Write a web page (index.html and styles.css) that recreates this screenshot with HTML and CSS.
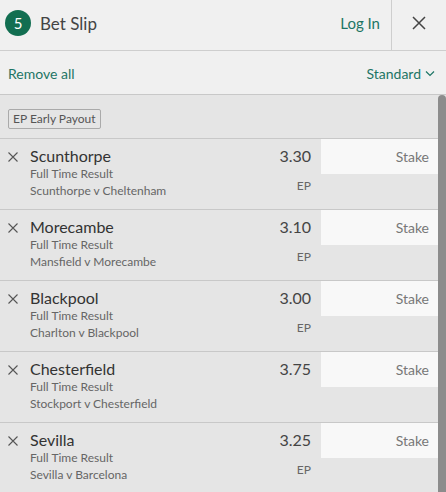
FILE: index.html
```html
<!DOCTYPE html>
<html lang="en">

<head>
    <meta charset="UTF-8">
    <meta name="viewport" content="width=device-width, initial-scale=1.0">
    <title>Bet Slip</title>
    <link rel="stylesheet" href="styles.css">
</head>

<body>
    <main>
        <header class="top">
            <div class="title">
                <span class="count">5</span>
                <span>Bet Slip</span>
            </div>
            <a class="login" href="#">Log In</a>
            <button class="close" aria-label="Close">
                <svg width="14" height="14" viewBox="0 0 14 14"><path d="M1 1L13 13M13 1L1 13" stroke="#444" stroke-width="1.5" fill="none"/></svg>
            </button>
        </header>
        <div class="toolbar">
            <a class="link" href="#">Remove all</a>
            <a class="link" href="#">Standard
                <svg width="10" height="6" viewBox="0 0 10 6"><path d="M1 0.5L5 4.5L9 0.5" stroke="#1d7565" stroke-width="1.2" fill="none"/></svg>
            </a>
        </div>
        <section class="list">
            <div class="thumb"></div>
            <div class="legend"><span class="tag">EP Early Payout</span></div>

            <div class="bet">
                <span class="remove"><svg width="10" height="10" viewBox="0 0 10 10"><path d="M0.5 0.5L9.5 9.5M9.5 0.5L0.5 9.5" stroke="#555" stroke-width="1.1" fill="none"/></svg></span>
                <div class="info">
                    <div class="name">Scunthorpe</div>
                    <div class="sub">Full Time Result</div>
                    <div class="sub">Scunthorpe v Cheltenham</div>
                </div>
                <div class="price">
                    <div class="odds">3.30</div>
                    <div class="ep">EP</div>
                </div>
                <div class="stake">Stake</div>
            </div>

            <div class="bet">
                <span class="remove"><svg width="10" height="10" viewBox="0 0 10 10"><path d="M0.5 0.5L9.5 9.5M9.5 0.5L0.5 9.5" stroke="#555" stroke-width="1.1" fill="none"/></svg></span>
                <div class="info">
                    <div class="name">Morecambe</div>
                    <div class="sub">Full Time Result</div>
                    <div class="sub">Mansfield v Morecambe</div>
                </div>
                <div class="price">
                    <div class="odds">3.10</div>
                    <div class="ep">EP</div>
                </div>
                <div class="stake">Stake</div>
            </div>

            <div class="bet">
                <span class="remove"><svg width="10" height="10" viewBox="0 0 10 10"><path d="M0.5 0.5L9.5 9.5M9.5 0.5L0.5 9.5" stroke="#555" stroke-width="1.1" fill="none"/></svg></span>
                <div class="info">
                    <div class="name">Blackpool</div>
                    <div class="sub">Full Time Result</div>
                    <div class="sub">Charlton v Blackpool</div>
                </div>
                <div class="price">
                    <div class="odds">3.00</div>
                    <div class="ep">EP</div>
                </div>
                <div class="stake">Stake</div>
            </div>

            <div class="bet">
                <span class="remove"><svg width="10" height="10" viewBox="0 0 10 10"><path d="M0.5 0.5L9.5 9.5M9.5 0.5L0.5 9.5" stroke="#555" stroke-width="1.1" fill="none"/></svg></span>
                <div class="info">
                    <div class="name">Chesterfield</div>
                    <div class="sub">Full Time Result</div>
                    <div class="sub">Stockport v Chesterfield</div>
                </div>
                <div class="price">
                    <div class="odds">3.75</div>
                </div>
                <div class="stake">Stake</div>
            </div>

            <div class="bet">
                <span class="remove"><svg width="10" height="10" viewBox="0 0 10 10"><path d="M0.5 0.5L9.5 9.5M9.5 0.5L0.5 9.5" stroke="#555" stroke-width="1.1" fill="none"/></svg></span>
                <div class="info">
                    <div class="name">Sevilla</div>
                    <div class="sub">Full Time Result</div>
                    <div class="sub">Sevilla v Barcelona</div>
                </div>
                <div class="price">
                    <div class="odds">3.25</div>
                    <div class="ep">EP</div>
                </div>
                <div class="stake">Stake</div>
            </div>
        </section>
    </main>
</body>

</html>
```
FILE: styles.css
```css
html, body {
    height: 100%;
}

body {
    background-color: rgb(229, 229, 229);
    color: rgb(51, 51, 51);
    font-family: Lato, "Open Sans", sans-serif;
    margin: 0;
    padding: 0;
}

main {
    display: flex;
    flex-direction: column;
    height: 100%;
}

a {
    text-decoration: none;
}

.top {
    align-items: center;
    background-color: rgb(240, 240, 240);
    border-bottom: 1px solid rgb(206, 206, 206);
    display: flex;
    flex: none;
    height: 50px;
    padding-left: 5px;
}

.title {
    align-items: center;
    color: rgb(68, 68, 68);
    display: flex;
    flex: 1;
    font-size: 17px;
    gap: 9px;
    margin-top: -4px;
}

.count {
    align-items: center;
    background-color: rgb(18, 110, 81);
    border-radius: 50%;
    color: rgb(255, 255, 255);
    display: flex;
    font-size: 15px;
    height: 26px;
    justify-content: center;
    width: 26px;
}

.login {
    color: rgb(29, 117, 101);
    font-size: 15px;
    margin-right: 11px;
    margin-top: -4px;
}

.close {
    align-items: center;
    align-self: stretch;
    background: none;
    border: none;
    border-left: 1px solid rgb(206, 206, 206);
    display: flex;
    justify-content: center;
    padding: 0 0 4px;
    width: 55px;
}

.toolbar {
    align-items: center;
    background-color: rgb(240, 240, 240);
    border-bottom: 1px solid rgb(200, 200, 200);
    display: flex;
    flex: none;
    height: 43px;
    justify-content: space-between;
    padding: 0 11px 0 8px;
}

.link {
    align-items: center;
    color: rgb(29, 117, 101);
    display: flex;
    font-size: 14px;
    gap: 4px;
    margin-top: 2px;
}

.list {
    flex: 1;
    overflow: hidden;
    padding-right: 8px;
    position: relative;
}

.thumb {
    background-color: rgb(140, 140, 140);
    border-radius: 4px 4px 0 0;
    bottom: 0;
    position: absolute;
    right: 0;
    top: 0;
    width: 8px;
}

.legend {
    box-sizing: border-box;
    height: 43px;
    padding: 12px 0 0 8px;
}

.tag {
    border: 1px solid rgb(170, 170, 170);
    border-radius: 2px;
    color: rgb(85, 85, 85);
    display: inline-block;
    font-size: 12px;
    line-height: 18px;
    padding: 0 4px;
}

.bet {
    border-top: 1px solid rgb(200, 200, 200);
    display: grid;
    grid-template-columns: 30px 1fr auto 117px;
    height: 70px;
}

.remove {
    align-self: start;
    display: flex;
    padding: 13px 0 0 8px;
}

.info {
    padding-top: 8px;
}

.name {
    color: rgb(51, 51, 51);
    font-size: 16px;
    line-height: 18px;
}

.sub {
    color: rgb(102, 102, 102);
    font-size: 12px;
    line-height: 17px;
}

.price {
    padding: 8px 10px 0 0;
    text-align: right;
}

.odds {
    color: rgb(68, 68, 68);
    font-size: 16px;
    line-height: 18px;
}

.ep {
    color: rgb(102, 102, 102);
    font-size: 12px;
    line-height: 16px;
    margin-top: 13px;
}

.stake {
    align-self: start;
    background-color: rgb(248, 248, 248);
    box-sizing: border-box;
    color: rgb(119, 119, 119);
    font-size: 14px;
    height: 35px;
    line-height: 35px;
    padding-right: 9px;
    text-align: right;
}
```
